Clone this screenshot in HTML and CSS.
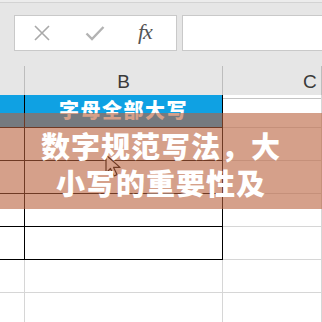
FILE: index.html
```html
<!DOCTYPE html>
<html lang="zh-CN">
<head>
    <meta charset="UTF-8">
    <meta name="viewport" content="width=device-width, initial-scale=1.0">
    <title>数字规范写法</title>
    <link rel="stylesheet" href="styles.css">
</head>
<body>

    <div class="screen">
        <div class="toolbar">
            <div class="formula-row">
                <div class="fx-box">
                    <svg class="icon" width="18" height="18" viewBox="0 0 18 18">
                        <path d="M2 2 L16 16 M16 2 L2 16" stroke="#a9a9a9" stroke-width="1.6" fill="none"/>
                    </svg>
                    <svg class="icon" width="20" height="16" viewBox="0 0 20 16">
                        <path d="M1.5 8.5 L7 14 L18.5 2" stroke="#b3b3b3" stroke-width="2.4" fill="none"/>
                    </svg>
                    <span class="fx">fx</span>
                </div>
                <div class="input-box"></div>
            </div>
        </div>

        <div class="sheet">
            <div class="row header">
                <div class="cell"></div>
                <div class="cell">B</div>
                <div class="cell">C</div>
            </div>
            <div class="row bordered">
                <div class="cell blue"></div>
                <div class="cell blue title-cell">字母全部大写</div>
                <div class="cell"></div>
            </div>
            <div class="row bordered">
                <div class="cell"></div>
                <div class="cell"></div>
                <div class="cell"></div>
            </div>
            <div class="row bordered">
                <div class="cell"></div>
                <div class="cell"></div>
                <div class="cell"></div>
            </div>
            <div class="row bordered">
                <div class="cell"></div>
                <div class="cell"></div>
                <div class="cell"></div>
            </div>
            <div class="row bordered">
                <div class="cell"></div>
                <div class="cell"></div>
                <div class="cell"></div>
            </div>
            <div class="row">
                <div class="cell"></div>
                <div class="cell"></div>
                <div class="cell"></div>
            </div>
            <div class="row">
                <div class="cell"></div>
                <div class="cell"></div>
                <div class="cell"></div>
            </div>

            <!-- mouse pointer -->
            <svg class="pointer" width="18" height="24" viewBox="0 0 18 24">
                <path d="M1 1 L1 19 L5.5 14.5 L9 22 L12 20.6 L8.6 13.4 L15 13.4 Z" fill="#fff" stroke="#000" stroke-width="1.2" stroke-linejoin="round"/>
            </svg>
        </div>

        <div class="banner">
            <p>数字规范写法，大</p>
            <p>小写的重要性及</p>
        </div>
    </div>

</body>
</html>
```

FILE: styles.css
```css
* {
    margin: 0;
    padding: 0;
    box-sizing: border-box;
}

body {
    font-family: 'Liberation Sans', 'Noto Sans CJK SC', sans-serif;
    background: #fff;
    width: 322px;
    height: 322px;
    overflow: hidden;
}

.screen {
    position: relative;
    width: 322px;
    height: 322px;
    overflow: hidden;
}

.toolbar {
    height: 66px;
    background: #e6e6e6;
    border-top: 3px solid #ececec;
    padding-top: 12px;
    padding-left: 14px;
}

.toolbar::before {
    content: "";
    display: block;
    height: 1px;
    margin: -13px 0 12px -14px;
    background: #d3d3d3;
}

.formula-row {
    display: flex;
    gap: 5px;
    height: 36px;
}

.fx-box {
    width: 163px;
    background: #fff;
    border: 1px solid #c9c9c9;
    display: flex;
    align-items: center;
    padding-left: 18px;
}

.fx-box .icon:first-child {
    margin-right: 34px;
}

.fx-box .icon:nth-child(2) {
    margin-right: 33px;
}

.fx {
    font-family: 'Liberation Serif', serif;
    font-style: italic;
    font-size: 22px;
    color: #555;
    letter-spacing: -1px;
    margin-top: -3px;
}

.input-box {
    flex: 1;
    background: #fff;
    border: 1px solid #c9c9c9;
    margin-right: -10px;
}

.sheet {
    position: relative;
}

.row {
    display: grid;
    grid-template-columns: 25px 198px 1fr;
    height: 33px;
}

.cell {
    border-right: 1px solid #d6d6d6;
    border-bottom: 1px solid #d6d6d6;
}

.header {
    height: 29px;
    background: #e6e6e6;
}

.header .cell {
    border-right-color: #bdbdbd;
    border-bottom-color: #c4c4c4;
    font-size: 19px;
    color: #3a3a3a;
    text-align: center;
    line-height: 32px;
}

.header .cell:last-child {
    text-align: left;
    padding-left: 80px;
}

.bordered .cell:nth-child(1),
.bordered .cell:nth-child(2) {
    border-right-color: #000;
    border-bottom-color: #000;
}

.blue {
    background: #0fa1e3;
}

.title-cell {
    color: #fff;
    font-family: 'Noto Sans CJK SC', sans-serif;
    font-weight: 900;
    font-size: 20px;
    letter-spacing: 1.5px;
    text-align: center;
    line-height: 30px;
}

.pointer {
    position: absolute;
    left: 105px;
    top: 88px;
}

.banner {
    position: absolute;
    left: 0;
    right: 0;
    top: 113px;
    height: 96px;
    background: rgba(185, 97, 60, 0.6);
    padding-top: 14px;
    text-align: center;
    color: #fff;
    font-family: 'Noto Sans CJK SC', sans-serif;
    font-weight: 900;
    font-size: 29px;
    line-height: 37px;
    letter-spacing: 1px;
}
```
